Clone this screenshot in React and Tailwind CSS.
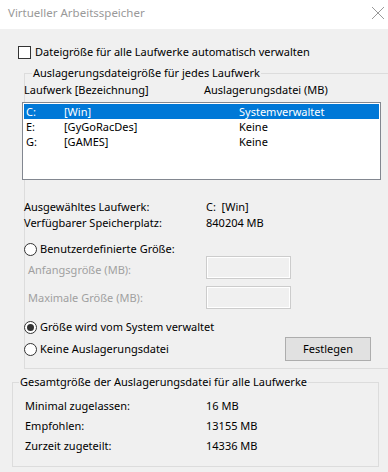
import React from 'react';

const drives = [
  { letter: 'C:', label: '[Win]', size: 'Systemverwaltet', selected: true },
  { letter: 'E:', label: '[GyGoRacDes]', size: 'Keine' },
  { letter: 'G:', label: '[GAMES]', size: 'Keine' },
];

function Radio({ checked }) {
  return (
    <span className="w-[13px] h-[13px] rounded-full border border-[#333] bg-white flex items-center justify-center shrink-0">
      {checked && <span className="w-[7px] h-[7px] rounded-full bg-[#333]" />}
    </span>
  );
}

function DisabledInput() {
  return (
    <div className="w-[85px] h-[23px] border border-[#cccccc]">
      <div className="w-full h-full border border-white bg-[#f0f0f0]" />
    </div>
  );
}

export default function App() {
  return (
    <div
      className="w-[388px] h-[472px] flex flex-col bg-[#f0f0f0] text-[11px] leading-[16px] text-black overflow-hidden"
      style={{ fontFamily: '"Noto Sans", "Liberation Sans", sans-serif' }}
    >
      {/* Title bar */}
      <div className="h-[29px] bg-white flex items-center justify-between pl-[8px] pr-[2px] shrink-0">
        <span className="text-[#999] text-[11.5px] -mt-[3px]">Virtueller Arbeitsspeicher</span>
        <svg width="14" height="14" viewBox="0 0 14 14" className="mr-[1px] -mt-[3px]">
          <path d="M1 1 L13 13 M13 1 L1 13" stroke="#999" strokeWidth="1" />
        </svg>
      </div>

      {/* Auto manage */}
      <div className="flex items-center mt-[15px] ml-[18px] h-[16px]">
        <span className="w-[13px] h-[13px] border border-[#333] bg-white shrink-0" />
        <span className="ml-[4px]">Dateigröße für alle Laufwerke automatisch verwalten</span>
      </div>

      {/* Per-drive group */}
      <fieldset className="ml-[24px] mt-[5px] border border-r-0 border-[#dcdcdc] px-0 pt-[1px] pb-[7px] min-w-0">
        <legend className="ml-[7px] px-[1px] h-[16px]">Auslagerungsdateigröße für jedes Laufwerk</legend>

        <div className="flex h-[16px] -ml-[1px]">
          <span className="w-[180px]">Laufwerk [Bezeichnung]</span>
          <span>Auslagerungsdatei (MB)</span>
        </div>

        <div className="-ml-[3px] mt-[4px] w-[359px] h-[78px] border border-[#828790] bg-white pt-[1px] pl-[1px] pr-[1px]">
          {drives.map((d) => (
            <div
              key={d.letter}
              className={`flex h-[15px] leading-[15px] items-center pl-[2px] ${d.selected ? 'bg-[#0078d7] text-white' : ''}`}
            >
              <span className="w-[38px]">{d.letter}</span>
              <span className="w-[175px]">{d.label}</span>
              <span>{d.size}</span>
            </div>
          ))}
        </div>

        <div className="flex h-[16px] -ml-[1px] mt-[19px]">
          <span className="w-[182px]">Ausgewähltes Laufwerk:</span>
          <span>C:&nbsp;&nbsp;[Win]</span>
        </div>
        <div className="flex h-[16px] -ml-[1px]">
          <span className="w-[182px]">Verfügbarer Speicherplatz:</span>
          <span>840204 MB</span>
        </div>

        <div className="flex items-center h-[14px] -ml-[1px] mt-[11px]">
          <Radio />
          <span className="ml-[3px]">Benutzerdefinierte Größe:</span>
        </div>

        <div className="flex h-[23px] ml-[3px]">
          <span className="w-[178px] pt-[6px] text-[#a0a0a0]">Anfangsgröße (MB):</span>
          <DisabledInput />
        </div>
        <div className="flex h-[23px] ml-[3px] mt-[7px]">
          <span className="w-[178px] pt-[4px] text-[#a0a0a0]">Maximale Größe (MB):</span>
          <DisabledInput />
        </div>

        <div className="flex items-center h-[16px] -ml-[1px] mt-[10px]">
          <Radio checked />
          <span className="ml-[3px]">Größe wird vom System verwaltet</span>
        </div>
        <div className="flex items-center h-[24px] -ml-[1px] mt-[2px]">
          <Radio />
          <span className="ml-[3px]">Keine Auslagerungsdatei</span>
          <button className="ml-auto mr-[17px] w-[86px] h-[24px] bg-[#e1e1e1] border border-[#adadad] text-black">
            Festlegen
          </button>
        </div>
      </fieldset>

      {/* Totals group */}
      <fieldset className="ml-[12px] mr-[9px] mt-[5px] border border-[#dcdcdc] px-0 pt-[6px] pb-[10px] min-w-0">
        <legend className="ml-[6px] px-[1px] h-[16px]">Gesamtgröße der Auslagerungsdatei für alle Laufwerke</legend>
        {[
          ['Minimal zugelassen:', '16 MB'],
          ['Empfohlen:', '13155 MB'],
          ['Zurzeit zugeteilt:', '14336 MB'],
        ].map(([k, v]) => (
          <div key={k} className="flex items-center h-[20px] ml-[12px]">
            <span className="w-[181px]">{k}</span>
            <span>{v}</span>
          </div>
        ))}
      </fieldset>
    </div>
  );
}
